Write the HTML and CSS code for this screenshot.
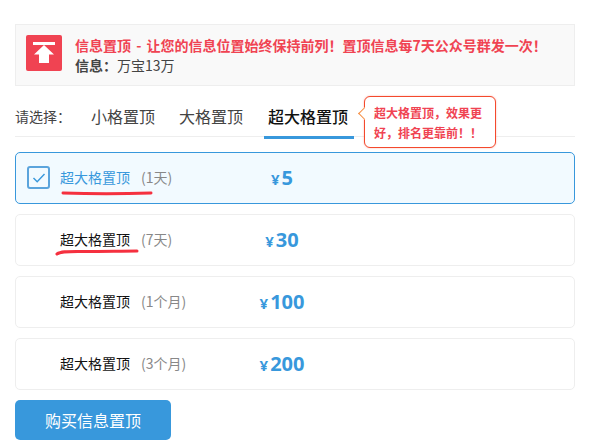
FILE: index.html
```html
<!DOCTYPE html>
<html lang="zh">
<head>
<meta charset="utf-8">
<title>信息置顶</title>
<link rel="stylesheet" href="styles.css">
</head>
<body>
<section class="info">
  <svg class="info-icon" width="36" height="36" viewBox="0 0 36 36"><rect width="36" height="36" rx="2" fill="#f04352"/><rect x="7" y="7" width="22" height="3" fill="#fff"/><path d="M18 10 L28 19.500 H23 V28 H13 V19.500 H8 Z" fill="#fff"/></svg>
  <div class="info-text">
    <p class="info-title">信息置顶 - 让您的信息位置始终保持前列！置顶信息每7天公众号群发一次！</p>
    <p class="info-sub"><b>信息：</b>万宝13万</p>
  </div>
</section>
<nav class="tabs">
  <span class="tabs-label">请选择：</span>
  <a class="tab">小格置顶</a>
  <a class="tab">大格置顶</a>
  <a class="tab tab-active">超大格置顶</a>
  <div class="tip">超大格置顶，效果更好，排名更靠前！！</div>
</nav>
<div class="options">
  <div class="option option-active">
    <span class="check"><svg width="14" height="12" viewBox="0 0 14 12"><path d="M1.5 6 L5.2 9.8 L12.5 2" fill="none" stroke="#3898dc" stroke-width="1.4"/></svg></span>
    <span class="name">超大格置顶</span><span class="term">(1天)</span><span class="price"><i>¥</i>5</span>
    <svg class="mark mark-one" width="92" height="6" viewBox="0 0 92 6"><path d="M2 3 C30 4 60 4 90 3" fill="none" stroke="#f5303f" stroke-width="3" stroke-linecap="round"/></svg>
  </div>
  <div class="option">
    <span class="name">超大格置顶</span><span class="term">(7天)</span><span class="price"><i>¥</i>30</span>
    <svg class="mark mark-two" width="84" height="8" viewBox="0 0 84 8"><path d="M2 6 C6 3 14 3.500 30 3.500 C50 3.500 66 3 82 3" fill="none" stroke="#f5303f" stroke-width="3" stroke-linecap="round"/></svg>
  </div>
  <div class="option">
    <span class="name">超大格置顶</span><span class="term">(1个月)</span><span class="price"><i>¥</i>100</span>
  </div>
  <div class="option">
    <span class="name">超大格置顶</span><span class="term">(3个月)</span><span class="price"><i>¥</i>200</span>
  </div>
</div>
<button class="buy">购买信息置顶</button>
</body>
</html>
```
FILE: styles.css
```css
* { box-sizing: border-box; }
html, body { margin: 0; padding: 0; background: #fff; }
body {
  width: 596px;
  height: 447px;
  overflow: hidden;
  padding: 24px 21px 0 15px;
  font-family: "Noto Sans CJK SC", "Open Sans", sans-serif;
  color: #333;
}
p { margin: 0; }

.info {
  display: flex;
  align-items: flex-start;
  height: 62px;
  padding: 10px 10px;
  background: #f9f9f9;
  border: 1px solid #eee;
}
.info-icon { flex: none; }
.info-text { margin-left: 13px; font-size: 14px; line-height: 20px; }
.info-title { color: #f04352; font-weight: 700; white-space: nowrap; word-spacing: 2px; }
.info-sub { color: #444; }
.info-sub b { font-weight: 700; }

.tabs {
  position: relative;
  display: flex;
  align-items: flex-start;
  height: 37px;
  margin-top: 14px;
  border-bottom: 1px solid #eee;
}
.tabs-label { width: 76px; font-size: 14px; line-height: 32px; color: #444; }
.tab {
  height: 38px;
  margin-right: 24px;
  font-size: 16px;
  line-height: 32px;
  color: #444;
}
.tab-active {
  width: 90px;
  height: 39px;
  margin-left: -3px;
  margin-right: 0;
  padding-left: 4px;
  color: #111;
  font-weight: 500;
  white-space: nowrap;
  border-bottom: 3px solid #3898dc;
}
.tip {
  position: absolute;
  left: 349px;
  top: -4px;
  width: 132px;
  height: 52px;
  padding: 6px 9px;
  background: #fff;
  border: 1.5px solid #f4492d;
  border-radius: 6px;
  box-shadow: 0 0 2px rgba(244, 73, 45, 0.4);
  font-size: 12px;
  line-height: 20px;
  color: #f04352;
  font-weight: 700;
}
.tip::before {
  content: "";
  position: absolute;
  left: -5px;
  top: 12px;
  width: 8px;
  height: 8px;
  background: #fff;
  border-left: 1px solid #f58a3c;
  border-bottom: 1px solid #f58a3c;
  transform: rotate(45deg);
}

.options { display: flex; flex-direction: column; gap: 10px; margin-top: 15px; }
.option {
  position: relative;
  display: flex;
  align-items: center;
  height: 52px;
  padding: 0 0 2px 44px;
  border: 1px solid #eee;
  border-radius: 5px;
  background: #fff;
}
.option-active { background: #f2faff; border-color: #3898dc; color: #3898dc; }
.check {
  position: absolute;
  left: 11px;
  top: 13px;
  width: 23px;
  height: 23px;
  display: flex;
  align-items: center;
  justify-content: center;
  border: 2px solid #5ba4dc;
  border-radius: 3px;
}
.name { width: 72px; font-size: 14px; color: #111; white-space: nowrap; }
.option-active .name { color: #3898dc; }
.term { width: 91px; margin-left: 9px; font-size: 14px; color: #888; white-space: nowrap; }
.price { width: 100px; text-align: center; font-size: 20px; font-weight: 700; color: #3898dc; font-family: "Open Sans", sans-serif; }
.price i { font-style: normal; font-size: 15px; margin-right: 2px; }
.mark { position: absolute; }
.mark-one { left: 45px; top: 37px; }
.mark-two { left: 39px; top: 33px; }

.buy {
  display: block;
  width: 156px;
  height: 40px;
  margin-top: 10px;
  border: 0;
  border-radius: 5px;
  background: #3898dc;
  color: #fff;
  font-family: inherit;
  font-size: 16px;
}
```
